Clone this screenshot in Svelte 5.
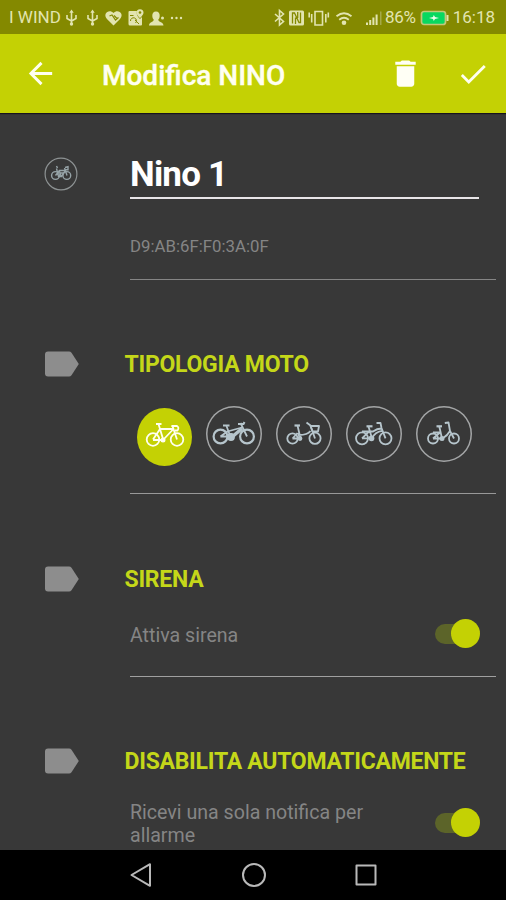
<script lang="ts">
  type Bike = { id: string; label: string };

  const bikes: Bike[] = [
    { id: 'race', label: 'Bici da corsa' },
    { id: 'electric', label: 'Bici elettrica' },
    { id: 'basket', label: 'Bici con cestino' },
    { id: 'city', label: 'Bici da città' },
    { id: 'folding', label: 'Bici pieghevole' },
  ];

  let selected = 'race';
  let name = 'Nino 1';
  let siren = true;
  let singleAlert = true;
</script>

<div class="screen">
  <div class="status-bar">
    <span class="carrier">I WIND</span>
    <svg class="status-left" viewBox="0 0 122 20" width="122" height="20" aria-hidden="true">
      <g fill="none" stroke="#e2e4b0" stroke-width="1.6">
        <path d="M6.500 3.500V16M2 7v3.500L6.500 13l4.500-2.500V7" />
        <path d="M27.500 3.500V16M23 7v3.500l4.500 2.500 4.500-2.500V7" />
      </g>
      <g fill="#e2e4b0">
        <path d="M6.500 1.500l2.200 3.300H4.300zM27.500 1.500l2.200 3.300h-4.400z" />
        <circle cx="6.500" cy="16" r="1.700" />
        <circle cx="27.500" cy="16" r="1.700" />
        <path d="M48.500 17.500l-6.300-6.200C37 6 44 .5 48.500 5c4.500-4.500 11.500 1 6.300 6.300z" />
        <path d="M64.500 3h7.500c-1 3.500 1 6 3 8l2-2v7.500a1 1 0 0 1-1 1H65a1.500 1.500 0 0 1-1.500-1.500V4a1 1 0 0 1 1-1z" />
        <path d="M75 1.200a3.500 3.500 0 0 1 3.500 3.500c0 2-3.500 5.300-3.500 5.300s-3.500-3.300-3.500-5.300A3.500 3.500 0 0 1 75 1.200z" />
        <path d="M91 3.500c2.600 0 3.700 1.800 3.700 4.200 0 2-.7 3-1.500 4 .3 2.300 5.300 2.300 5.300 5.800H84c0-3.500 4.500-3.500 4.800-5.800-.8-1-1.500-2-1.500-4 0-2.400 1.100-4.200 3.700-4.200z" />
        <circle cx="97.500" cy="10" r="1.500" />
        <circle cx="107" cy="10" r="1.200" />
        <circle cx="111.500" cy="10" r="1.200" />
        <circle cx="116" cy="10" r="1.200" />
      </g>
      <path d="M44.500 8l2.500-1 3.500 5 3-2.500M49 7.500l3 3" fill="none" stroke="#848900" stroke-width="1.200" />
      <circle cx="75" cy="4.500" r="1.300" fill="#848900" />
      <path d="M65 7.500h3.500M65.500 13a3 3 0 1 1 5 2M70 12l4 4" fill="none" stroke="#848900" />
    </svg>
    <svg class="status-right" viewBox="0 0 110 20" width="110" height="20" aria-hidden="true">
      <g fill="none" stroke="#e2e4b0">
        <path d="M2 6l8.500 7.500L6.500 17V2.500l4 3.500L2 13.500" stroke-width="1.600" />
        <path d="M42 3.500h7.500v13.500H42zM38.700 6v8.500M52.800 6v8.500M36.200 4.500v5M55.300 4.500v5" stroke-width="1.600" />
        <path d="M63.500 8.200q7.500-6 15 0M66.200 11.700q4.800-3.800 9.600 0" stroke-width="1.800" />
      </g>
      <path d="M17.500 2.500h12a1.500 1.500 0 0 1 1.500 1.500v12a1.500 1.500 0 0 1-1.500 1.500h-12a1.500 1.500 0 0 1-1.500-1.500V4a1.500 1.500 0 0 1 1.500-1.500z" fill="#e2e4b0" />
      <path d="M19.500 15.500V5h2l4.500 9.500h1.500V4.500M22.500 16V9.500M24.700 10V4" fill="none" stroke="#848900" stroke-width="1.300" />
      <circle cx="71" cy="14.700" r="2.300" fill="#e2e4b0" />
      <path d="M93 17v-2.500h2V17zM96.200 17v-5h2v5zM99.400 17V9.500h2V17zM102.600 17V6.500h2V17z" fill="#e2e4b0" />
      <path d="M107 17V3.500h1.500V17z" fill="#a5a948" />
    </svg>
    <span class="percent">86%</span>
    <svg class="battery" viewBox="0 0 30 16" width="30" height="16" aria-hidden="true">
      <rect x="1.500" y="1.500" width="24" height="13" rx="2.500" fill="#08d860" stroke="#c3c67a" stroke-width="1.700" />
      <path d="M26.500 5h2v6h-2z" fill="#e2e4b0" />
      <path d="M9 8l4-1 .8-2 1.200 2 4 1-4 1-1.200 2L13 9z" fill="#e9ffe9" />
    </svg>
    <span class="clock">16:18</span>
  </div>

  <header class="app-bar">
    <button type="button" class="icon-button back" aria-label="Indietro">
      <svg viewBox="0 0 24 24" width="35" height="35" fill="#fffff0">
        <path d="M20 11H7.830l5.590-5.590L12 4l-8 8 8 8 1.410-1.410L7.830 13H20z" />
      </svg>
    </button>
    <h1>Modifica NINO</h1>
    <button type="button" class="icon-button trash" aria-label="Elimina">
      <svg viewBox="0 0 24 24" width="35" height="35" fill="#fffff5">
        <path d="M6 19c0 1.100.9 2 2 2h8c1.100 0 2-.9 2-2V7H6zM19 4h-3.500l-1-1h-5l-1 1H5v2h14z" />
      </svg>
    </button>
    <button type="button" class="icon-button confirm" aria-label="Salva">
      <svg viewBox="0 0 24 24" width="34" height="34" fill="#fffff0">
        <path d="M9 16.170L4.830 12l-1.420 1.410L9 19 21 7l-1.410-1.410z" />
      </svg>
    </button>
  </header>

  <main>
    <section class="identity">
      <svg class="avatar" viewBox="0 0 34 34" width="34" height="34" fill="none" stroke="#96a3a7" aria-hidden="true">
        <circle cx="17" cy="17" r="15.900" stroke="#8d9293" stroke-width="1.200" />
        <g stroke-width="1.400">
          <circle cx="11.500" cy="18.500" r="3.900" />
          <circle cx="22.800" cy="18.500" r="3.900" />
          <path d="M11.500 18.500l4-5h6l-4 6h-3l-2-8M13.500 11l-1-2M15 13l2 6M20.500 11l2.500 7.500M21 10.500l3-.8v3h-2.500M15.500 16h5" />
        </g>
      </svg>
      <div class="fields">
        <input class="name" bind:value={name} aria-label="Nome" />
        <div class="address">D9:AB:6F:F0:3A:0F</div>
      </div>
    </section>

    <section class="group types">
      <div class="heading">
        <span class="tag"><svg viewBox="0 0 35 26" width="35" height="26"><path d="M4 .5h21q1.500 0 2.500 1.300L34.800 13l-7.300 11.200q-1 1.300-2.500 1.300H4q-3 0-3-3v-19q0-3 3-3z" fill="#8d8d8d" /></svg></span>
        <h2>TIPOLOGIA MOTO</h2>
      </div>
      <div class="bikes">
        {#each bikes as bike}
          <button
            type="button"
            class="bike"
            class:selected={selected === bike.id}
            aria-label={bike.label}
            on:click={() => (selected = bike.id)}
          >
            <svg viewBox="0 0 56 56" width="56" height="56" fill="none" stroke="currentColor" stroke-width="1.800" stroke-linejoin="round">
              {#if bike.id === 'race'}
                <g>
                  <circle cx="16" cy="31.500" r="6.300" />
                  <circle cx="40" cy="31.500" r="6.300" />
                  <path d="M16 31.500L23 21h13.500L26 32H16M21.500 16l4.800 16M35.300 17.500L40 31.500" />
                  <path d="M19 16h5.500M34.500 18h5.500q2.500 1.500.5 4.500h-2.500" />
                  <circle cx="26" cy="32" r="1.600" fill="currentColor" />
                </g>
              {:else if bike.id === 'electric'}
                <g>
                  <circle cx="14.500" cy="30.500" r="6.900" stroke-width="2.200" />
                  <circle cx="41" cy="30.500" r="6.900" stroke-width="2.200" />
                  <path d="M14.400 30.500l7-5 14.500-4M14.400 30.500H25M20.500 20l4 11M34.500 17l6.500 13.500" />
                  <path d="M26 31l10-8.500" stroke-width="3.500" />
                  <path d="M17 19.500h6.500M32 18h5.500l1-2" stroke-width="2" />
                  <circle cx="25" cy="31" r="3" fill="currentColor" />
                </g>
              {:else if bike.id === 'basket'}
                <g>
                  <circle cx="16.500" cy="32.500" r="5.200" />
                  <circle cx="39" cy="32.300" r="5.600" />
                  <path d="M16.500 32.500l5-5.500M16.500 32.500h7.500l-2-5.500M21.500 19.500l3 13M30.500 16.500l4 3 4.500 13M34.500 25q-3 4-11.500 4" />
                  <path d="M18.500 19.500h5.500" stroke-width="2.200" />
                  <path d="M34.500 20h8.500l-1 5.500h-5.500z" />
                  <circle cx="24" cy="32.500" r="1.500" fill="currentColor" />
                </g>
              {:else if bike.id === 'city'}
                <g>
                  <circle cx="16" cy="32.300" r="6" />
                  <circle cx="39.500" cy="32.300" r="6" />
                  <path d="M16 32.300l7-6.800h4q4-3 8.500-3M16 32.300h10q3-6.500 10-7.500M22.500 20.500l3.500 12M30.500 17h4l1 5 4 10.300M16 25.500h7" />
                  <path d="M20.500 20.300h6" stroke-width="2.200" />
                  <circle cx="25.500" cy="32.300" r="2" fill="currentColor" />
                </g>
              {:else}
                <g>
                  <circle cx="17" cy="32.500" r="5" />
                  <circle cx="38" cy="32.500" r="5" />
                  <path d="M17 32.500l6.500-5.500M17 32.500h9.500q5-3 7.500-7.500M23.300 20.500l2.700 12M28.800 17l3.700-.5 1.500 8.500 4 7.500M17 26.500h7" />
                  <path d="M20.500 20.300H26" stroke-width="2.200" />
                  <circle cx="26" cy="32.500" r="1.600" fill="currentColor" />
                </g>
              {/if}
            </svg>
          </button>
        {/each}
      </div>
    </section>

    <section class="group siren">
      <div class="heading">
        <span class="tag"><svg viewBox="0 0 35 26" width="35" height="26"><path d="M4 .5h21q1.500 0 2.500 1.300L34.800 13l-7.300 11.200q-1 1.300-2.500 1.300H4q-3 0-3-3v-19q0-3 3-3z" fill="#8d8d8d" /></svg></span>
        <h2>SIRENA</h2>
      </div>
      <div class="setting">
        <span>Attiva sirena</span>
        <button type="button" class="switch" class:on={siren} aria-label="Attiva sirena" on:click={() => (siren = !siren)}></button>
      </div>
    </section>

    <section class="group auto">
      <div class="heading">
        <span class="tag"><svg viewBox="0 0 35 26" width="35" height="26"><path d="M4 .5h21q1.500 0 2.500 1.300L34.800 13l-7.300 11.200q-1 1.300-2.500 1.300H4q-3 0-3-3v-19q0-3 3-3z" fill="#8d8d8d" /></svg></span>
        <h2>DISABILITA AUTOMATICAMENTE</h2>
      </div>
      <div class="setting">
        <span>Ricevi una sola notifica per allarme</span>
        <button type="button" class="switch" class:on={singleAlert} aria-label="Notifica singola" on:click={() => (singleAlert = !singleAlert)}></button>
      </div>
    </section>
  </main>

  <nav>
    <svg viewBox="0 0 24 26" width="24" height="26"><path d="M21 2.200v21.600L2.500 13z" /></svg>
    <svg viewBox="0 0 26 26" width="26" height="26"><circle cx="13" cy="13" r="11" /></svg>
    <svg viewBox="0 0 24 26" width="24" height="26"><path d="M2.500 3.500h19v19h-19z" /></svg>
  </nav>
</div>

<style>
  :global(body) {
    background: #383838;
  }

  .screen {
    display: flex;
    flex-direction: column;
    width: 506px;
    height: 900px;
    overflow: hidden;
    background: #383838;
    font-family: Roboto, 'Noto Sans', sans-serif;
  }

  button {
    padding: 0;
    border: 0;
    background: transparent;
    cursor: pointer;
  }

  svg {
    display: block;
    flex: none;
  }

  .status-bar {
    display: flex;
    align-items: center;
    box-sizing: border-box;
    flex: none;
    height: 34px;
    padding: 1px 11px 0 9px;
    background: #848900;
    color: #e2e4b0;
    font-size: 17px;
    line-height: 33px;
    white-space: nowrap;
  }

  .carrier {
    width: 56px;
  }

  .status-right {
    margin-left: 86px;
  }

  .percent {
    width: 38px;
    margin-left: 2px;
    letter-spacing: -0.3px;
  }

  .battery {
    margin-left: -3px;
  }

  .clock {
    margin-left: auto;
  }

  .app-bar {
    display: flex;
    align-items: center;
    box-sizing: border-box;
    flex: none;
    height: 79px;
    padding: 0 16px 0 23px;
    background: #c4d104;
    box-shadow: 0 1px 1px #17131d;
    color: #fffff0;
  }

  h1 {
    flex: 1;
    margin: 3px 0 0 44px;
    font-size: 28px;
    font-weight: 500;
    white-space: nowrap;
    -webkit-text-stroke: 0.4px currentColor;
  }

  .trash {
    margin-right: 33px;
  }

  main {
    flex: 1;
    min-height: 0;
    overflow: hidden;
  }

  .identity {
    display: flex;
    padding: 44px 10px 0 44px;
  }

  .fields {
    flex: 1;
    height: 122px;
    margin-left: 52px;
    border-bottom: 1px solid #858585;
  }

  .name {
    display: block;
    box-sizing: border-box;
    width: 349px;
    height: 42px;
    padding: 0 0 5px;
    border: 0;
    border-bottom: 2px solid #e8e5e8;
    border-radius: 0;
    outline: 0;
    background: transparent;
    color: #fff;
    font: 700 35px/35px Roboto, sans-serif;
    letter-spacing: -0.8px;
  }

  .address {
    margin-top: 37px;
    color: #858585;
    font-size: 16.800px;
    line-height: 20px;
  }

  .heading {
    display: flex;
    align-items: center;
    height: 26px;
  }

  .tag {
    width: 80.500px;
    padding-left: 44px;
  }

  h2 {
    margin: 1px 0 0;
    color: #c4d719;
    font-size: 23px;
    font-weight: 700;
    letter-spacing: -0.270px;
    line-height: 26px;
    white-space: nowrap;
  }

  .types {
    padding-top: 71px;
  }

  .siren {
    padding-top: 72px;
  }

  .auto {
    padding-top: 71px;
  }

  .bikes {
    display: flex;
    justify-content: space-between;
    height: 87px;
    margin: 0 10px 0 130px;
    padding: 29px 24px 0 7px;
    border-bottom: 1px solid #989898;
  }

  .bike {
    box-sizing: border-box;
    width: 56px;
    height: 56px;
    border-radius: 50%;
    box-shadow: inset 0 0 0 1.500px #a4a6a7;
    color: #b6c5cc;
  }

  .bike.selected {
    display: flex;
    justify-content: center;
    width: 55px;
    height: 58px;
    margin-top: 2px;
    background: #c4d104;
    box-shadow: none;
    color: #fffff0;
  }

  .setting {
    display: flex;
    align-items: center;
    justify-content: space-between;
    height: 84px;
    margin: 0 10px 0 130px;
    padding-right: 16px;
    color: #858585;
    font-size: 19.600px;
    line-height: 23px;
  }

  .setting span {
    width: 250px;
    padding-top: 2px;
  }

  .siren .setting {
    border-bottom: 1px solid #a0a0a0;
  }

  .auto .setting {
    height: 97px;
  }

  .switch {
    position: relative;
    width: 45px;
    height: 30px;
  }

  .switch::before,
  .switch::after {
    content: '';
    position: absolute;
  }

  .switch::before {
    top: 5px;
    left: 0;
    width: 40px;
    height: 20px;
    border-radius: 10px;
    background: #606060;
  }

  .switch::after {
    top: 0;
    left: 0;
    width: 29px;
    height: 29px;
    border-radius: 50%;
    background: #b9b9b9;
  }

  .switch.on::before {
    background: #5c6429;
  }

  .switch.on::after {
    left: 16px;
    background: #c4d104;
  }

  nav {
    display: flex;
    align-items: center;
    justify-content: space-between;
    box-sizing: border-box;
    flex: none;
    height: 50px;
    padding: 0 128px 0 129px;
    background: #000;
  }

  nav svg {
    fill: none;
    stroke: #b9b9b9;
    stroke-width: 2;
    stroke-linejoin: round;
  }
</style>
